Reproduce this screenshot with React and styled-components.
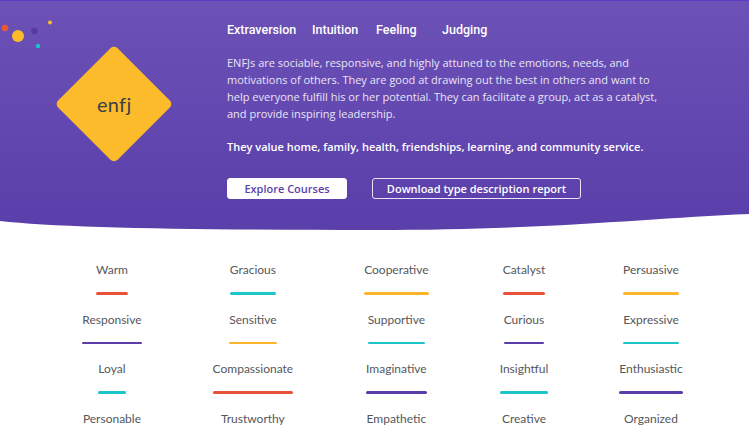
import React from "react";
import styled, { createGlobalStyle } from "styled-components";

const Global = createGlobalStyle`
  html, body { margin: 0; padding: 0; background: #fff; }
  body { font-family: "Open Sans", "Liberation Sans", sans-serif; overflow: hidden; }
  * { box-sizing: border-box; }
`;

const Page = styled.div`
  width: 749px;
  min-height: 437px;
  background: #fff;
`;

const Hero = styled.header`
  position: relative;
  height: 232px;
  border-top: 1px solid #5a3dc6;
  background: linear-gradient(180deg, #6c52b6 0%, #6248b0 50%, #5a3eaa 100%);
  display: flex;
  padding-top: 19px;
`;

const Wave = styled.svg`
  position: absolute;
  left: 0;
  bottom: 0;
  width: 749px;
  height: 22px;
  display: block;
`;

const Dots = styled.svg`
  position: absolute;
  left: 0;
  top: 0;
`;

const BadgeCol = styled.div`
  width: 227px;
  flex: none;
  display: flex;
  justify-content: center;
  padding-top: 42px;
`;

const Diamond = styled.div`
  width: 84px;
  height: 84px;
  background: #fcbb2a;
  border-radius: 5px;
  transform: rotate(45deg);
  display: flex;
  align-items: center;
  justify-content: center;
  span {
    transform: rotate(-45deg);
    font-family: "Lato", "Noto Sans", sans-serif;
    font-size: 20px;
    color: #3b3f4c;
    letter-spacing: 0.3px;
  }
`;

const Content = styled.div`
  display: flex;
  flex-direction: column;
  width: 460px;
`;

const Nav = styled.nav`
  display: flex;
  height: 19px;
  align-items: center;
`;

const NavItem = styled.span`
  font-family: "Roboto", "Noto Sans", sans-serif;
  font-weight: 500;
  font-size: 12.5px;
  color: #fff;
  width: ${(p) => p.$w}px;
  flex: none;
`;

const Para = styled.p`
  margin: ${(p) => (p.$bold ? "16px" : "15px")} 0 0;
  font-size: 11px;
  line-height: 17px;
  white-space: nowrap;
  font-weight: ${(p) => (p.$bold ? 600 : 400)};
  color: ${(p) => (p.$bold ? "#fff" : "#e9e5f5")};
`;

const Buttons = styled.div`
  display: flex;
  gap: 25px;
  margin-top: 23px;
`;

const Button = styled.a`
  height: 21px;
  display: inline-flex;
  align-items: center;
  justify-content: center;
  border-radius: 3px;
  font-size: 11px;
  font-weight: 600;
  white-space: nowrap;
  text-decoration: none;
  background: ${(p) => (p.$outline ? "transparent" : "#fff")};
  color: ${(p) => (p.$outline ? "#fff" : "#5b3fab")};
  border: 1.5px solid ${(p) => (p.$outline ? "#e9e4f6" : "#fff")};
  width: ${(p) => p.$w}px;
`;

const Traits = styled.section`
  display: flex;
  justify-content: center;
  gap: 71px;
  padding: 31px 0 0 16px;
`;

const Column = styled.div`
  display: flex;
  flex-direction: column;
  align-items: center;
`;

const Trait = styled.div`
  display: inline-flex;
  flex-direction: column;
  align-items: stretch;
  margin-bottom: 18px;
`;

const TraitName = styled.span`
  font-family: "Lato", "Noto Sans", sans-serif;
  font-size: 12px;
  line-height: 14px;
  color: #55575c;
  text-align: center;
  white-space: nowrap;
`;

const Bar = styled.span`
  display: block;
  height: 2.5px;
  margin-top: 15px;
  border-radius: 2px;
  background: ${(p) => p.$c};
`;

const C = {
  red: "#e8523b",
  cyan: "#1cc5ca",
  purple: "#5a3dab",
  yellow: "#fbb52c",
};

const columns = [
  [["Warm", "red"], ["Responsive", "purple"], ["Loyal", "cyan"], ["Personable", null]],
  [["Gracious", "cyan"], ["Sensitive", "yellow"], ["Compassionate", "red"], ["Trustworthy", null]],
  [["Cooperative", "yellow"], ["Supportive", "cyan"], ["Imaginative", "purple"], ["Empathetic", null]],
  [["Catalyst", "red"], ["Curious", "purple"], ["Insightful", "cyan"], ["Creative", null]],
  [["Persuasive", "yellow"], ["Expressive", "cyan"], ["Enthusiastic", "purple"], ["Organized", null]],
];

export default function App() {
  return (
    <Page>
      <Global />
      <Hero>
        <Dots width="60" height="55" viewBox="0 0 60 55">
          <circle cx="5" cy="27" r="3.3" fill="#e9573c" />
          <circle cx="18" cy="35" r="6" fill="#fbbb2a" />
          <circle cx="34.5" cy="30" r="3.3" fill="#5838a6" />
          <circle cx="38" cy="45" r="2.2" fill="#1ec3c9" />
          <circle cx="50" cy="21.5" r="2" fill="#fbbb2a" />
        </Dots>
        <BadgeCol>
          <Diamond>
            <span>enfj</span>
          </Diamond>
        </BadgeCol>
        <Content>
          <Nav>
            <NavItem $w={85}>Extraversion</NavItem>
            <NavItem $w={64}>Intuition</NavItem>
            <NavItem $w={66}>Feeling</NavItem>
            <NavItem $w={60}>Judging</NavItem>
          </Nav>
          <Para>
            ENFJs are sociable, responsive, and highly attuned to the emotions, needs, and
            <br />
            motivations of others. They are good at drawing out the best in others and want to
            <br />
            help everyone fulfill his or her potential. They can facilitate a group, act as a catalyst,
            <br />
            and provide inspiring leadership.
          </Para>
          <Para $bold>
            They value home, family, health, friendships, learning, and community service.
          </Para>
          <Buttons>
            <Button $w={120}>Explore Courses</Button>
            <Button $outline $w={209}>Download type description report</Button>
          </Buttons>
        </Content>
        <Wave viewBox="0 0 749 22" preserveAspectRatio="none">
          <path d="M0 11 C 60 18, 200 20, 375 20 S 650 8, 749 4 L 749 22 L 0 22 Z" fill="#fff" />
        </Wave>
      </Hero>
      <Traits>
        {columns.map((col, i) => (
          <Column key={i}>
            {col.map(([name, color]) => (
              <Trait key={name}>
                <TraitName>{name}</TraitName>
                {color && <Bar $c={C[color]} />}
              </Trait>
            ))}
          </Column>
        ))}
      </Traits>
    </Page>
  );
}
